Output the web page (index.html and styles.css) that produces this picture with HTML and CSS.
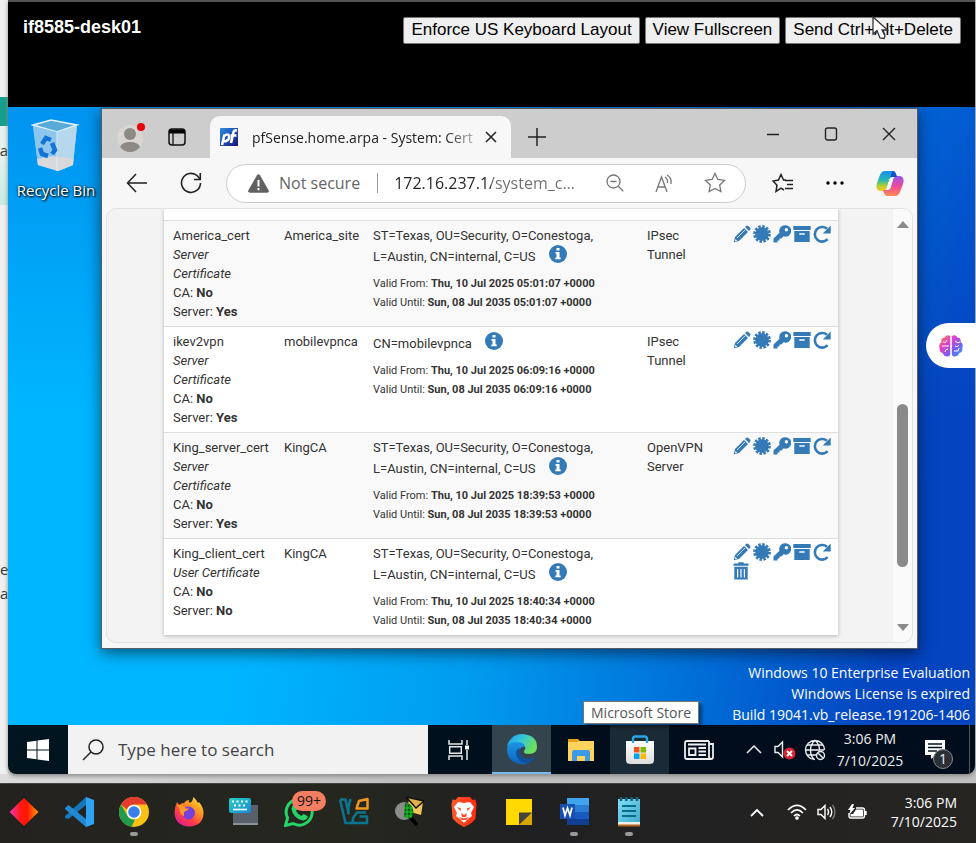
FILE: index.html
```html
<!DOCTYPE html>
<html lang="en">
<head>
<meta charset="utf-8">
<meta name="viewport" content="width=device-width, initial-scale=1">
<title>if8585-desk01</title>
<link rel="stylesheet" href="styles.css">
</head>
<body>
<svg class="defs" aria-hidden="true">
  <defs>
    <linearGradient id="g-edge1" x1="0" y1="0" x2="1" y2="0.4"><stop offset="0" stop-color="#1b9de2"/><stop offset=".5" stop-color="#35c4dd"/><stop offset="1" stop-color="#6be05a"/></linearGradient>
    <linearGradient id="g-edge2" x1="0" y1="0" x2="0" y2="1"><stop offset="0" stop-color="#1e96e6"/><stop offset="1" stop-color="#0a63bd"/></linearGradient>
    <linearGradient id="g-pf" x1="0" y1="0" x2="1" y2="1"><stop offset="0" stop-color="#2f8fe0"/><stop offset=".5" stop-color="#1b4fb2"/><stop offset="1" stop-color="#1c1470"/></linearGradient>
    <linearGradient id="g-cop1" x1="0" y1="0" x2="0" y2="1"><stop offset="0" stop-color="#1b8fec"/><stop offset=".45" stop-color="#27b7b5"/><stop offset=".75" stop-color="#b5cf34"/><stop offset="1" stop-color="#ffc51f"/></linearGradient>
    <linearGradient id="g-cop2" x1="0" y1="0" x2="0" y2="1"><stop offset="0" stop-color="#9a55ee"/><stop offset=".5" stop-color="#ec4b99"/><stop offset="1" stop-color="#ff8a4c"/></linearGradient>
    <linearGradient id="g-brain" x1="0" y1="0" x2="1" y2="1"><stop offset="0" stop-color="#ff8a3c"/><stop offset=".35" stop-color="#e63fc8"/><stop offset=".65" stop-color="#7a5cf5"/><stop offset="1" stop-color="#28a8f5"/></linearGradient>
    <linearGradient id="g-dia"><stop offset="0" stop-color="#f03ac0"/><stop offset=".35" stop-color="#ff1a1a"/><stop offset=".6" stop-color="#ff1500"/><stop offset="1" stop-color="#ff9a10"/></linearGradient>
    <linearGradient id="g-fox" x1="1" y1="0" x2="0.3" y2="1"><stop offset="0" stop-color="#fff04a"/><stop offset=".4" stop-color="#ff9a1f"/><stop offset=".75" stop-color="#ff3a4a"/><stop offset="1" stop-color="#e2208c"/></linearGradient>
    <linearGradient id="g-kb" x1="0" y1="0" x2="1" y2="1"><stop offset="0" stop-color="#2bd0c0"/><stop offset="1" stop-color="#1488d8"/></linearGradient>
    <linearGradient id="g-brave"><stop offset="0" stop-color="#ff5a2c"/><stop offset="1" stop-color="#ff2a10"/></linearGradient>
    <linearGradient id="g-store" x1="0" y1="0" x2="0" y2="1"><stop offset="0" stop-color="#fff"/><stop offset="1" stop-color="#dcdcdc"/></linearGradient>
    <linearGradient id="g-pad" x1="0" y1="0" x2="1" y2="1"><stop offset="0" stop-color="#7fe0f5"/><stop offset="1" stop-color="#3fa9cc"/></linearGradient>
  </defs>
  <symbol id="i-edit" viewBox="0 0 18 18"><path d="M2 12 11 3l4 4-9 9-5.200 1.200z"/><path d="m12 2 1-1q1.200-1 2.400 0L17 2.600q1 1.200 0 2.400l-1 1z"/><path d="m4 13 8-8" stroke="#fff" stroke-width=".8"/><path d="m2.500 14 1.800 1.800-2.300.5z" fill="#fff"/></symbol>
  <symbol id="i-badge" viewBox="0 0 18 18"><circle cx="9" cy="9" r="6.800"/><circle cx="9" cy="9" r="7.300" fill="none" stroke="currentColor" stroke-width="3.200" stroke-dasharray="2.400 1.420"/></symbol>
  <symbol id="i-key" viewBox="0 0 18 18"><path fill-rule="evenodd" d="M12 .3a5.700 5.700 0 0 0-5.500 7.400L.5 13.600V17.500h4v-2h2v-2h2l2-2.200A5.700 5.700 0 1 0 12 .3zm1.400 2.800a1.700 1.700 0 1 1 0 3.400 1.700 1.700 0 0 1 0-3.400z"/></symbol>
  <symbol id="i-box" viewBox="0 0 18 18"><path d="M.3 1h17.400v4H.3z"/><path fill-rule="evenodd" d="M1.300 6h15.400v11H1.300zm5 2.200v1.600h5.400V8.200z"/></symbol>
  <symbol id="i-renew" viewBox="0 0 18 18"><path d="M14.600 14.200A7.300 7.300 0 1 1 14 3.800" fill="none" stroke="currentColor" stroke-width="2.600"/><path d="M17.700.5v8H9.800z"/></symbol>
  <symbol id="i-trash" viewBox="0 0 16 18"><path d="M.5 1.500h4.800V.3h5.400v1.200h4.800v2.300H.5zM1.300 4.800h13.400v12.700H1.300z"/><path d="M4.600 7v8.500M8 7v8.500M11.400 7v8.500" stroke="#fff" stroke-width="1.200"/></symbol>
  <symbol id="i-info" viewBox="0 0 18 18"><circle cx="9" cy="9" r="9"/><path fill="#fff" d="M7.500 3h3v2.600h-3zM6.500 7h4v5.500h1.200v1.700H6.300v-1.700h1.200V8.700h-1z"/></symbol>
</svg>

<main class="host">
  <aside class="behind">
    <div class="behind-band"></div>
    <div class="behind-card">ta</div>
    <div class="behind-text">e<br>a</div>
  </aside>

  <section class="session">
    <header class="session-bar">
      <h1>if8585-desk01</h1>
      <div class="session-actions">
        <button type="button">Enforce US Keyboard Layout</button>
        <button type="button">View Fullscreen</button>
        <button type="button">Send Ctrl+Alt+Delete</button>
      </div>
      <svg class="cursor" width="17" height="24" viewBox="0 0 17 24"><path d="M1 1v17l4-3.500 3 7.500 4 .5 1-2.500-3-6h5.500z" fill="#fff" stroke="#333" stroke-width="1.300"/></svg>
    </header>

    <div class="desktop">
      <div class="shortcut">
        <svg width="50" height="56" viewBox="0 0 50 56">
          <path d="M2 7 20 2l26 5-4 40-15 6-20-6z" fill="#9fcdec"/>
          <path d="M2 7 20 2l26 5-20 7z" fill="#58abd8" stroke="#e4f2fa" stroke-width="1.500"/>
          <path d="M2 8 26 14l1 38-20-5z" fill="#8cc6ec"/><path d="M26 14 46 8l-4 39-15 6z" fill="#b7d8ec"/>
          <path d="M6 41 22 38l20 3v6l-15 6-20-6z" fill="#d9d9db"/><path d="M26 14v39" stroke="#d9edf8"/>
          <g fill="none" stroke="#1673d6" stroke-width="4.500"><path d="m11 26 4-6 5 2"/><path d="m21 25 3 7-3 4"/><path d="m17 38-6-2-2-6"/></g>
        </svg>
        <span>Recycle Bin</span>
      </div>

      <div class="watermark">Windows 10 Enterprise Evaluation<br>Windows License is expired<br>Build 19041.vb_release.191206-1406</div>

      <article class="browser">
        <div class="tabs">
          <button type="button" class="plain profile" aria-label="Profile">
            <svg width="30" height="30" viewBox="0 0 30 30"><circle cx="14" cy="16" r="13" fill="#d9d6d2"/><circle cx="14" cy="12" r="6" fill="#8d8985"/><path d="M4 25q2-5 10-5t10 5q-4 5-10 5t-10-5z" fill="#8d8985"/><circle cx="25" cy="5" r="4" fill="#e8000c"/></svg>
          </button>
          <button type="button" class="plain spaces" aria-label="Tab actions">
            <svg width="18" height="18" viewBox="0 0 18 18"><rect x="1" y="1" width="16" height="16" rx="3" fill="none" stroke="#111" stroke-width="1.500"/><path d="M1 1.500h16V5.500H1z"/><path d="M5 5v12" stroke="#111" stroke-width="1.300"/></svg>
          </button>
          <div class="tab">
            <svg width="18" height="18" viewBox="0 0 18 18"><path fill="url(#g-pf)" d="M0 0h18v18H0z"/><g fill="none" stroke="#fff" stroke-width="2.600"><path d="M2 17 4.500 6.500M4 8q4-3 5 0t-2 4.500-4 0"/><path d="M11 15 13.500 4q.8-2 3.500-1.500M10.500 7.500h6"/></g></svg>
            <span class="tab-title">pfSense.home.arpa - System: Cert</span>
            <button type="button" class="plain" aria-label="Close tab"><svg width="12" height="12" viewBox="0 0 12 12"><path d="m1 1 10 10M11 1 1 11" stroke="#222" stroke-width="1.500"/></svg></button>
          </div>
          <button type="button" class="plain newtab" aria-label="New tab"><svg width="18" height="18" viewBox="0 0 18 18"><path d="M9 0v18M0 9h18" stroke="#222" stroke-width="1.500"/></svg></button>
          <div class="caption">
            <button type="button" class="plain" aria-label="Minimize"><svg width="14" height="14" viewBox="0 0 14 14"><path d="M1 7.500h12" stroke="#222" stroke-width="1.300"/></svg></button>
            <button type="button" class="plain" aria-label="Maximize"><svg width="14" height="14" viewBox="0 0 14 14"><rect x="1.500" y="1" width="11" height="12" rx="2" fill="none" stroke="#222" stroke-width="1.400"/></svg></button>
            <button type="button" class="plain" aria-label="Close"><svg width="14" height="14" viewBox="0 0 14 14"><path d="m1 1 12 12M13 1 1 13" stroke="#222" stroke-width="1.400"/></svg></button>
          </div>
        </div>

        <div class="toolbar">
          <button type="button" class="plain" aria-label="Back"><svg width="22" height="20" viewBox="0 0 22 20"><path d="M21 10H2M10 1 1.500 10l8.500 9" fill="none" stroke="#222" stroke-width="1.500"/></svg></button>
          <button type="button" class="plain" aria-label="Refresh"><svg width="22" height="22" viewBox="0 0 22 22"><path d="M20.500 11A9.500 9.500 0 1 1 17.500 4l2.500 3" fill="none" stroke="#222" stroke-width="1.600"/><path d="M20.300 1v6.500H14" fill="none" stroke="#222" stroke-width="1.600"/></svg></button>
          <div class="address">
            <svg width="21" height="19" viewBox="0 0 21 19"><path d="M9 1.200q1.500-2 3 0l8.600 15q.8 2.400-1.600 2.600H2q-2.400-.2-1.600-2.600z" fill="#616161"/><path d="M10.500 6v6.500M10.500 14v2.300" stroke="#fff" stroke-width="2"/></svg>
            <label for="url">Not secure</label>
            <i class="divider"></i>
            <input id="url" type="text" value="172.16.237.1/system_c...">
            <button type="button" class="plain" aria-label="Zoom out"><svg width="18" height="18" viewBox="0 0 18 18" fill="none" stroke="#777" stroke-width="1.300"><circle cx="7.500" cy="7.500" r="6.500"/><path d="m12.300 12.300 5 5M4.500 7.500h6"/></svg></button>
            <button type="button" class="plain" aria-label="Read aloud"><svg width="20" height="20" viewBox="0 0 20 20" fill="none" stroke="#777" stroke-width="1.300"><path d="M2 19 7.500 4 13 19M4 14h7M11 4q3 2 2.500 6M13 2q5 3 4 9"/></svg></button>
            <button type="button" class="plain" aria-label="Favorite this page"><svg width="22" height="22" viewBox="0 0 22 22"><path d="m11 1.500 2.900 6 6.600.9-4.800 4.600 1.200 6.600L11 16.500l-5.900 3.100L6.300 13 1.500 8.400l6.600-.9z" fill="none" stroke="#777" stroke-width="1.300"/></svg></button>
          </div>
          <button type="button" class="plain" aria-label="Favorites"><svg width="22" height="20" viewBox="0 0 22 20" fill="none" stroke="#222" stroke-width="1.500"><path d="M12 17 9 15.200 4 18.400 5 12.200 1 8l5.500-1L9 1.500 11.500 7H14M13 7.500h8M15 11.500h6M13 15.500h8"/></svg></button>
          <button type="button" class="plain" aria-label="More"><svg width="18" height="4" viewBox="0 0 18 4"><circle cx="2" cy="2" r="1.700"/><circle cx="9" cy="2" r="1.700"/><circle cx="16" cy="2" r="1.700"/></svg></button>
          <button type="button" class="plain" aria-label="Copilot"><svg width="28" height="27" viewBox="0 0 28 27"><path d="M9 1h8q2 0 3 3l1 3h-4q-3 0-4 4l-2 7q-1 3-4 3H4q-5-1-3-8l3-8q1.500-4 5-4z" fill="url(#g-cop1)"/><path d="M19 26h-8q-2 0-3-3l-1-3h4q3 0 4-4l2-7q1-3 4-3h3q5 1 3 8l-3 8q-1.500 4-5 4z" fill="url(#g-cop2)"/><path d="M16 1q3 0 4 3l1 3h-4q-2 0-3 2z" fill="#1550c8"/><path d="m13.500 9-2.800 9.500q-.7 1.500-2 1.500h2.800q2.500 0 3.300-2.800l2.500-8.400q.4-1.700 2-1.800h-2.600q-2.400 0-3.200 2z" fill="#fff"/></svg></button>
        </div>

        <div class="pane">
          <div class="page">
            <div class="cut-row"></div>
            <table>
              <colgroup><col class="c-name"><col class="c-issuer"><col><col class="c-use"><col class="c-act"></colgroup>
              <tbody>
                <tr>
                  <td>America_cert<br><i>Server<br>Certificate</i><br>CA: <b>No</b><br>Server: <b>Yes</b></td>
                  <td>America_site</td>
                  <td>ST=Texas, OU=Security, O=Conestoga,
                    <div class="dn">L=Austin, CN=internal, C=US <svg><use href="#i-info"/></svg></div>
                    <div class="valid">Valid From: <b>Thu, 10 Jul 2025 05:01:07 +0000</b><br>Valid Until: <b>Sun, 08 Jul 2035 05:01:07 +0000</b></div></td>
                  <td>IPsec<br>Tunnel</td>
                  <td><div class="acts"><a href="#" aria-label="Edit"><svg><use href="#i-edit"/></svg></a><a href="#" aria-label="Export certificate"><svg><use href="#i-badge"/></svg></a><a href="#" aria-label="Export key"><svg><use href="#i-key"/></svg></a><a href="#" aria-label="Export archive"><svg><use href="#i-box"/></svg></a><a href="#" aria-label="Renew"><svg><use href="#i-renew"/></svg></a></div></td>
                </tr>
                <tr>
                  <td>ikev2vpn<br><i>Server<br>Certificate</i><br>CA: <b>No</b><br>Server: <b>Yes</b></td>
                  <td>mobilevpnca</td>
                  <td><div class="dn">CN=mobilevpnca <svg><use href="#i-info"/></svg></div>
                    <div class="valid">Valid From: <b>Thu, 10 Jul 2025 06:09:16 +0000</b><br>Valid Until: <b>Sun, 08 Jul 2035 06:09:16 +0000</b></div></td>
                  <td>IPsec<br>Tunnel</td>
                  <td><div class="acts"><a href="#" aria-label="Edit"><svg><use href="#i-edit"/></svg></a><a href="#" aria-label="Export certificate"><svg><use href="#i-badge"/></svg></a><a href="#" aria-label="Export key"><svg><use href="#i-key"/></svg></a><a href="#" aria-label="Export archive"><svg><use href="#i-box"/></svg></a><a href="#" aria-label="Renew"><svg><use href="#i-renew"/></svg></a></div></td>
                </tr>
                <tr>
                  <td>King_server_cert<br><i>Server<br>Certificate</i><br>CA: <b>No</b><br>Server: <b>Yes</b></td>
                  <td>KingCA</td>
                  <td>ST=Texas, OU=Security, O=Conestoga,
                    <div class="dn">L=Austin, CN=internal, C=US <svg><use href="#i-info"/></svg></div>
                    <div class="valid">Valid From: <b>Thu, 10 Jul 2025 18:39:53 +0000</b><br>Valid Until: <b>Sun, 08 Jul 2035 18:39:53 +0000</b></div></td>
                  <td>OpenVPN<br>Server</td>
                  <td><div class="acts"><a href="#" aria-label="Edit"><svg><use href="#i-edit"/></svg></a><a href="#" aria-label="Export certificate"><svg><use href="#i-badge"/></svg></a><a href="#" aria-label="Export key"><svg><use href="#i-key"/></svg></a><a href="#" aria-label="Export archive"><svg><use href="#i-box"/></svg></a><a href="#" aria-label="Renew"><svg><use href="#i-renew"/></svg></a></div></td>
                </tr>
                <tr>
                  <td>King_client_cert<br><i>User Certificate</i><br>CA: <b>No</b><br>Server: <b>No</b></td>
                  <td>KingCA</td>
                  <td>ST=Texas, OU=Security, O=Conestoga,
                    <div class="dn">L=Austin, CN=internal, C=US <svg><use href="#i-info"/></svg></div>
                    <div class="valid">Valid From: <b>Thu, 10 Jul 2025 18:40:34 +0000</b><br>Valid Until: <b>Sun, 08 Jul 2035 18:40:34 +0000</b></div></td>
                  <td></td>
                  <td><div class="acts"><a href="#" aria-label="Edit"><svg><use href="#i-edit"/></svg></a><a href="#" aria-label="Export certificate"><svg><use href="#i-badge"/></svg></a><a href="#" aria-label="Export key"><svg><use href="#i-key"/></svg></a><a href="#" aria-label="Export archive"><svg><use href="#i-box"/></svg></a><a href="#" aria-label="Renew"><svg><use href="#i-renew"/></svg></a><a href="#" aria-label="Delete"><svg class="trash"><use href="#i-trash"/></svg></a></div></td>
                </tr>
              </tbody>
            </table>
          </div>
          <div class="scroll">
            <svg width="12" height="7" viewBox="0 0 12 7"><path d="M0 7 6 0l6 7z" fill="#8a8a8a"/></svg>
            <div class="rail"><div class="thumb"></div></div>
            <svg width="12" height="7" viewBox="0 0 12 7"><path d="M0 0 6 7l6-7z" fill="#8a8a8a"/></svg>
          </div>
        </div>
      </article>
      <div class="tooltip">Microsoft Store</div>
    </div>

    <footer class="vmbar">
      <button type="button" class="plain start" aria-label="Start"><svg width="22" height="22" viewBox="0 0 22 22" fill="#fff"><path d="M0 3l9.500-1.300v8.800H0zM10.500 1.500 22 0v10.500H10.500zM0 11.500h9.500v8.800L0 19zM10.500 11.500H22V22l-11.500-1.500z"/></svg></button>
      <div class="search"><svg width="22" height="22" viewBox="0 0 22 22" fill="none" stroke="#222" stroke-width="1.500"><circle cx="14" cy="8" r="7"/><path d="m9 13-8 8"/></svg><input type="search" placeholder="Type here to search" aria-label="Search"></div>
      <button type="button" class="plain view" aria-label="Task View"><svg width="22" height="20" viewBox="0 0 22 20" fill="none" stroke="#e8e8e8" stroke-width="1.500"><path d="M1 0v4h13V0M1 20v-4h13v4M1.700 6.700h11.600v6.600H1.700zM19 0v5M19 10v10"/><path d="M17 5.500h4v4h-4z" fill="#fff" stroke="none"/></svg></button>
      <button type="button" class="plain app active" aria-label="Microsoft Edge"><svg width="32" height="32" viewBox="0 0 32 32"><path d="M1 14A15 15 0 0 1 16 1q15 1 15 13 0 7-8 7-6 0-5-3 2-2 1-4-2-5-9-4-7 1-9 4z" fill="url(#g-edge1)"/><path d="M1 16Q2 9 10 9q8 0 9 5-3-1-5 2-4 6 2 11 4 2 8 2-4 3-9 2Q1 29 1 16z" fill="url(#g-edge2)"/><path d="M14 15q-6 2-3 9 4 7 10 6 6-1 8-6-6 3-11 1-7-4-4-10z" fill="#124f9c"/></svg></button>
      <button type="button" class="plain app" aria-label="File Explorer"><svg width="28" height="24" viewBox="0 0 28 24"><path d="M1 1h10l2 2h13v20H1z" fill="#e3a21a"/><path d="M1 4h9l3-1h14v20H1z" fill="#ffd35e"/><path d="M5 23v-9q0-2 2-2h14q2 0 2 2v9h-5v-5h-8v5z" fill="#3a9be6"/></svg></button>
      <button type="button" class="plain app hover" aria-label="Microsoft Store"><svg width="30" height="30" viewBox="0 0 30 30"><path d="M8 9V4q0-2.500 2.500-2.500h9Q22 1.500 22 4v5" fill="none" stroke="#27a9e6" stroke-width="2.400"/><path d="M1 6h28v19q0 4-4 4H5q-4 0-4-4z" fill="url(#g-store)"/><path d="M8 8V6M22 8V6" stroke="#27a9e6" stroke-width="2.400"/><path d="M9 12h5.500v5.500H9z" fill="#f25022"/><path d="M15.500 12H21v5.500h-5.500z" fill="#7fba00"/><path d="M9 18.500h5.500V24H9z" fill="#00a4ef"/><path d="M15.500 18.500H21V24h-5.500z" fill="#ffb900"/></svg></button>
      <button type="button" class="plain app" aria-label="News"><svg width="30" height="20" viewBox="0 0 30 20" fill="none" stroke="#eee" stroke-width="1.800"><path d="M25 1H3Q1 1 1 3v14q0 2 2 2h24q2 0 2-2V4h-4M25 1v15q0 3 2 3M4 4.500h18M14.500 8H22M14.500 11.500H22M14.500 15H22M5 8.500h6.500v6.500H5z"/></svg></button>
      <div class="vmtray">
        <svg width="16" height="9" viewBox="0 0 16 9"><path d="m1 8 7-7 7 7" fill="none" stroke="#eee" stroke-width="1.500"/></svg>
        <svg class="mute" width="22" height="20" viewBox="0 0 22 20"><path d="M1 6.500h3L8.500 2v15L4 12.500H1z" fill="none" stroke="#eee" stroke-width="1.400"/><circle cx="15.500" cy="13.500" r="6" fill="#d92232"/><path d="m13 11 5 5M18 11l-5 5" stroke="#fff" stroke-width="1.800"/></svg>
        <svg class="globe" width="22" height="22" viewBox="0 0 22 22" fill="none" stroke="#eee" stroke-width="1.400"><path d="M11 20.500A9.500 9.500 0 1 1 20.500 11M11 1.500Q6.500 5 6.500 11T10 20.500M11 1.500Q15.500 5 15.500 11M3 6h16M2 11h18M3 16h9"/><circle cx="16.500" cy="16.500" r="4"/><path d="m13.700 13.700 5.600 5.600"/></svg>
        <div class="vmclock">3:06 PM<br>7/10/2025</div>
        <div class="note"><svg width="22" height="21" viewBox="0 0 22 21"><path d="M1 1h20v15H12l-5 4v-4H1z" fill="#fff"/><path d="M4 5h14M4 8.500h14M4 12h9" stroke="#06101c" stroke-width="1.500"/></svg><span>1</span></div>
      </div>
    </footer>
  </section>

  <button type="button" class="plain brain" aria-label="Assistant"><svg width="24" height="24" viewBox="0 0 24 24"><path d="M11.200 2q-4-2-5.500 1.500Q1.500 4 2.500 8-1 10.500.7 14q-.7 4 3 5 1.300 4 5.500 3.500 2-.3 2-2.500zM12.800 2q4-2 5.500 1.500Q22.500 4 21.500 8q3.500 2.500 1.800 6 .7 4-3 5-1.300 4-5.500 3.500-2-.3-2-2.500z" fill="url(#g-brain)"/><path d="M3 12h7M4 8q3 2 4-2M6 18q0-3 3-3M21 8q-2 2-5-1M20 11q-2 3-4 1M15 17h4l1-3" fill="none" stroke="#fff"/></svg></button>
</main>

<nav class="hostbar">
  <div class="apps">
    <div class="ico"><svg viewBox="0 0 30 30"><path d="m15 1 14.500 14L15 29 .5 15z" fill="url(#g-dia)"/></svg></div>
    <div class="ico"><svg viewBox="0 0 30 30"><path d="M1 19 22 0v8L4.500 22 1 21z" fill="#1277bd"/><path d="M1 11 4.500 8 22 22v8L1 12z" fill="#2189d2"/><path d="m22 0 8 3v24l-8 3z" fill="#2ea3f2"/></svg></div>
    <div class="ico run"><svg viewBox="0 0 30 30"><circle cx="15" cy="15" r="15" fill="#fbc116"/><path d="M2 7.500A15 15 0 0 1 28 7.500H15a7.500 7.500 0 0 0-7 5z" fill="#e33b2e"/><path d="M2 7.500 8.500 18.700A7.500 7.500 0 0 0 16 22.400L12.500 29.800A15 15 0 0 1 2 7.500z" fill="#229a4c"/><circle cx="15" cy="15" r="7.300" fill="#fff"/><circle cx="15" cy="15" r="5.800" fill="#3b7de9"/></svg></div>
    <div class="ico"><svg viewBox="0 0 30 30"><path d="M3 5q1 1 2 3 2-2 5-2 2-3 5-3-1 2 1 3Q19 4 19.500 0q3 3 4.500 6l1-1q5 6 4.500 12-1 12-14.500 12.500Q1.500 29 .5 16q0-6 2.500-11z" fill="url(#g-fox)"/><circle cx="14.500" cy="16" r="6.500" fill="#7540dc"/><path d="M3 8q6-1 8 3 2 1 4 0-1 3-4 3-2 2-1 5-4-1-4-5-1-4-3-6z" fill="#ff9a25"/></svg></div>
    <div class="ico"><svg viewBox="0 0 30 30"><path d="M4 8h25v19H4z" fill="#596069"/><path d="M4 26h25v2H4z" fill="#8a9098"/><rect width="22" height="15" y="1" rx="2" fill="url(#g-kb)"/><path d="M3 4.500h16M5 8.500h13" stroke="#fff" stroke-width="2" stroke-dasharray="2 2.500"/><path d="M4 12.500h14" stroke="#fff" stroke-width="1.600"/></svg></div>
    <div class="ico"><svg viewBox="0 0 30 30"><path d="M1.500 28.500 3.600 21A13 13 0 1 1 9 26.500z" fill="none" stroke="#25d366" stroke-width="3"/><path d="M9.500 8h2.500l1.500 4-1.500 2q2 3.500 5.500 5l2-2 4 2v2q-2 3-5.500 2.300Q9 21 7.500 12q0-3 2-4z" fill="#25d366"/></svg><span class="count">99+</span></div>
    <div class="ico"><svg viewBox="0 0 30 30" fill="none" stroke-width="2.500" stroke-linejoin="round"><path d="M1 2.500h5.500l3 14V10M12.500 3H11L9.500 10M1 2.500 6.500 26h6.500l1-4M27 15.500h-9l-4 5.500v5h14v-6.500h-7.500" stroke="#0b7590"/><path d="M28.500 11.500h-11L20 4l8.500-2z" stroke="#f0961f"/></svg></div>
    <div class="ico"><svg viewBox="0 0 30 30"><path d="m15 2 14 3-2 13-14-4z" fill="#f4c55c"/><path d="m12 0 18 4-8 7z" fill="#e2b04a" stroke="#111" stroke-width="1.500"/><circle cx="10" cy="14" r="9" fill="#8a8d8a"/><path d="M11 6a9 9 0 0 1 6 15l-7-1z" fill="#075f10"/><path d="M10 11h9M10 15h9M10 19h8M13 7v15M17 8v13" stroke="#20d02c"/><path d="m17 21 6 7" stroke="#000" stroke-width="3.500"/></svg></div>
    <div class="ico"><svg viewBox="0 0 30 30"><path d="m9 0h12l2.500 3 3-.5 1 5-1 14q-3 5-11.500 8.500Q6.500 26 3.500 21l-1-14 1-4.500 3 .5z" fill="url(#g-brave)"/><path d="m9 5 6 1 6-1 4 5-3 6 1 3-4 3-4 4-4-4-4-3 1-3-3-6z" fill="#fff"/><path d="m8 10 4 1.500-.5 2.500zM22 10l-4 1.500.5 2.500zM12 16l3 2 3-2-1 4h-4zM10 20l5 1.500 5-1.500-3 3h-4z" fill="#ff4520"/></svg></div>
    <div class="ico"><svg viewBox="0 0 30 30"><path d="M2 2h26v26H2z" fill="#ffd900"/><path d="M15 28h13V16z" fill="#d9a400"/><path d="M15 15.500h13L15 28z" fill="#45413c"/></svg></div>
    <div class="ico run"><svg viewBox="0 0 30 30"><path d="M8 1h22v7H8z" fill="#41a5ee"/><path d="M8 8h22v7H8z" fill="#2b7cd3"/><path d="M8 15h22v7H8z" fill="#185abd"/><path d="M8 22h22v6H8z" fill="#103f91"/><path d="M1 7h15v15H1z" fill="#1650b0"/><path d="m4 10.500 2 8 2.500-7.500 2.500 7.500 2-8" fill="none" stroke="#fff" stroke-width="1.700"/></svg></div>
    <div class="ico run"><svg viewBox="0 0 30 30"><path d="M4 2h22v24H4z" fill="url(#g-pad)"/><path d="M4 25h22v3H4z" fill="#f0eee8"/><path d="M4 27.500h22v2H4z" fill="#b5651d"/><path d="M8 9h14M8 14h14M8 19h14" stroke="#0a6a8c" stroke-width="2"/><path d="M7 0v4M12.300 0v4M17.600 0v4M23 0v4" stroke="#12627e" stroke-width="2.500"/></svg></div>
  </div>
  <div class="hosttray">
    <svg width="14" height="9" viewBox="0 0 14 9"><path d="m1 8 6-6 6 6" fill="none" stroke="#fff" stroke-width="1.800"/></svg>
    <svg class="wifi" width="20" height="16" viewBox="0 0 20 16" fill="none" stroke="#fff" stroke-width="1.700"><path d="M1 6q9-9 18 0M4 9q6-6 12 0M7 12q3-3 6 0"/><circle cx="10" cy="14" r="1" fill="#fff"/></svg>
    <svg class="vol" width="20" height="16" viewBox="0 0 20 16" fill="none" stroke="#fff" stroke-width="1.400"><path d="M1 5.500h3L8 1.500v13l-4-4H1zM10.500 5q2 3 0 6M13 3q3.500 5 0 10"/><path d="M15.500 1q5 7 0 14" stroke="#777"/></svg>
    <svg class="bat" width="20" height="16" viewBox="0 0 20 16"><path d="M9 4h6.500q2 0 2 2v6q0 2-2 2H4q-2 0-2-2V9" fill="none" stroke="#fff" stroke-width="1.400"/><path d="M9 5.500h7v7H3.500V10H6z" fill="#fff"/><path d="M18 7h1.700v4H18zM5 0 1 6h2.500L2 11l6-7H5.500L7 0z" fill="#fff"/></svg>
    <div class="hostclock">3:06 PM<br>7/10/2025</div>
  </div>
</nav>
</body>
</html>
```
FILE: styles.css
```css
* { box-sizing: border-box; }

body {
  margin: 0;
  min-height: 100vh;
  display: flex;
  flex-direction: column;
  overflow: hidden;
  font-family: "Open Sans", "Noto Sans", sans-serif;
  font-size: 14px;
  color: #333;
  background: #c4c4c4;
}

svg { display: block; flex: none; }
.defs { position: absolute; width: 0; height: 0; }

.plain {
  display: flex;
  align-items: center;
  justify-content: center;
  flex: none;
  padding: 0;
  border: 0;
  background: none;
}

/* Remote session */
.host {
  position: relative;
  flex: 1;
  display: grid;
  grid-template-columns: 8px 1fr;
  padding: 0 1px 9px 0;
  background: linear-gradient(90deg, #dcdcdc, #c0c0c0 40%);
}

.behind {
  overflow: hidden;
  padding-top: 97px;
  background: #f0f0f0;
  font-size: 15px;
  line-height: 24px;
}
.behind-band { height: 29px; background: #159e8c; }
.behind-card {
  display: flex;
  justify-content: flex-end;
  height: 79px;
  padding-top: 12px;
  background: linear-gradient(#e4f3f0 30%, #c8ebe4);
}
.behind-text { margin-top: 352px; }

.session {
  display: flex;
  flex-direction: column;
  min-width: 0;
  border-top: 2px solid #555;
  border-radius: 0 0 8px 8px;
  overflow: hidden;
  box-shadow: 0 2px 4px #888;
}

.session-bar {
  position: relative;
  display: flex;
  justify-content: space-between;
  align-items: flex-start;
  height: 105px;
  padding: 15px 14px 0 15px;
  background: #000;
  font-family: "Liberation Sans", Arial, sans-serif;
}
.session-bar h1 { margin: 0; font-size: 18px; line-height: 21px; color: #fff; }
.session-actions { display: flex; gap: 5px; }
.session-actions button {
  height: 27px;
  padding: 0 7px 1px;
  border: 1px solid #767676;
  border-radius: 2px;
  background: #efefef;
  color: #000;
  font-family: inherit;
  font-size: 17px;
}
.cursor { position: absolute; top: 14px; right: 86px; }

.desktop {
  position: relative;
  flex: 1;
  background:
    linear-gradient(#0070e080, #0070e000 50%),
    linear-gradient(100deg, #00b6ff 30%, #009cf0 52%, #006fd8 73%, #0444bf 91%);
}

.shortcut {
  position: absolute;
  top: 11px;
  left: 0;
  width: 96px;
  display: flex;
  flex-direction: column;
  align-items: center;
  gap: 6px;
  color: #fff;
  font-size: 15px;
  line-height: 20px;
  text-shadow: 1px 1px 2px #000, 0 0 3px #000;
}

.watermark {
  position: absolute;
  right: 5px;
  bottom: 0;
  color: #fff;
  font-size: 14px;
  line-height: 21px;
  text-align: right;
}

.tooltip {
  position: absolute;
  left: 575px;
  bottom: 1px;
  padding: 0 7px;
  border: 1px solid #777;
  background: #fff;
  color: #575757;
  font-size: 14px;
  line-height: 21px;
  box-shadow: 3px 3px 3px #0006;
}

/* Browser window */
.browser {
  position: absolute;
  inset: 1px 57px 76px 93px;
  display: flex;
  flex-direction: column;
  border: 1px solid #555c66;
  background: #f7f7f7;
  box-shadow: 0 4px 14px #0008;
}

.tabs {
  display: flex;
  align-items: center;
  height: 49px;
  background: #cdcdcd;
}
.profile { width: 30px; margin: 6px 0 0 14px; }
.spaces { width: 18px; margin: 6px 24px 0 22px; }
.tab {
  align-self: flex-end;
  display: flex;
  align-items: center;
  width: 301px;
  height: 42px;
  padding: 0 14px 0 10px;
  border-radius: 10px 10px 0 0;
  background: #f7f7f7;
  color: #222;
}
.tab-title {
  flex: 1;
  margin: 0 6px 0 14px;
  white-space: nowrap;
  font-size: 14px;
  -webkit-mask-image: linear-gradient(90deg, #000 85%, #0003);
  mask-image: linear-gradient(90deg, #000 85%, #0003);
}
.newtab { margin: 6px 0 0 17px; }
.caption { display: flex; gap: 44px; margin: 0 21px 0 auto; }

.toolbar {
  display: flex;
  align-items: center;
  height: 50px;
  padding: 0 13px 0 24px;
  gap: 32px;
}
.address {
  flex: 1;
  display: flex;
  align-items: center;
  min-width: 0;
  height: 39px;
  margin: 0 -6px 0 -8px;
  padding: 0 19px 0 21px;
  border: 1px solid #ccc;
  border-radius: 20px;
  background: #fff;
  gap: 30px;
}
.address label { margin: 0 -13px 0 -20px; color: #666; font-size: 16px; }
.divider { width: 1px; height: 20px; background: #999; }
.address input {
  flex: 1;
  min-width: 0;
  margin: 0 -20px 0 -14px;
  padding: 0;
  border: 0;
  outline: 0;
  font: 16px "Open Sans", "Noto Sans", sans-serif;
  color: #222;
  background: linear-gradient(90deg, #222 97px, #707070 97px);
  -webkit-background-clip: text;
  background-clip: text;
  -webkit-text-fill-color: transparent;
}

.pane {
  flex: 1;
  display: flex;
  min-height: 0;
  margin: 0 4px 5px;
  border: 1px solid #e2e2e2;
  border-radius: 10px;
  overflow: hidden;
  background: #f3f3f3;
}
.page {
  flex: 1;
  align-self: flex-start;
  margin: 0 55px 0 57px;
  background: #fff;
  box-shadow: 0 1px 4px #0004;
}
.cut-row { height: 11px; }

table {
  width: 100%;
  table-layout: fixed;
  border-collapse: collapse;
  font-family: Roboto, "Liberation Sans", sans-serif;
  font-size: 13px;
  line-height: 19px;
}
.c-name { width: 111px; }
.c-issuer { width: 89px; }
.c-use { width: 86px; }
.c-act { width: 114px; }
td {
  padding: 5px 0 5px 9px;
  border-top: 1px solid #ddd;
  vertical-align: top;
  white-space: nowrap;
}
td:last-child { padding-top: 4px; }
tr:nth-child(odd) { background: #f9f9f9; }
.dn { display: flex; align-items: center; gap: 13px; height: 22px; }
.dn svg { width: 18px; height: 18px; margin-bottom: 4px; fill: #337ab7; }
.valid { margin-top: 7px; font-size: 11px; }
.acts { display: flex; flex-wrap: wrap; gap: 1px 2px; }
.acts a { display: block; color: #337ab7; }
.acts svg { width: 18px; height: 18px; fill: currentColor; }
.acts .trash { width: 16px; }

.scroll {
  display: flex;
  flex-direction: column;
  align-items: center;
  gap: 3px;
  width: 19px;
  padding: 12px 0 11px;
  background: #fafafa;
}
.rail { flex: 1; display: flex; flex-direction: column; }
.rail::before { content: ""; flex: 173; }
.rail::after { content: ""; flex: 54; }
.thumb { flex: 163; width: 11px; border-radius: 6px; background: #8a8a8a; }

/* Remote taskbar */
.vmbar {
  display: flex;
  height: 49px;
  background: linear-gradient(90deg, #00151f, #000d1c 70%);
  color: #eee;
}
.start { width: 60px; }
.search {
  display: flex;
  align-items: center;
  width: 360px;
  padding: 0 14px;
  gap: 14px;
  background: #f2f2f2;
}
.search input {
  flex: 1;
  min-width: 0;
  padding: 0;
  border: 0;
  background: none;
  font: 17px "Open Sans", "Noto Sans", sans-serif;
}
.search input::placeholder { color: #444; opacity: 1; }
.view { width: 62px; }
.app { width: 59px; }
.app.active { background: #34444f; border-bottom: 2px solid #76b9ed; margin-left: 2px; }
.app.hover { background: #1b2a37; }
.vmtray { display: flex; align-items: center; margin-left: auto; padding-right: 5px; }
.mute { margin-left: 12px; }
.globe { margin-left: 8px; }
.vmclock { width: 88px; text-align: center; font-size: 14px; line-height: 22px; }
.note {
  position: relative;
  width: 56px;
  height: 49px;
  padding: 14px 0 0 10px;
  border-right: 1px solid #555;
}
.note span {
  position: absolute;
  left: 19px;
  top: 24px;
  width: 20px;
  height: 20px;
  border: 1px solid #888;
  border-radius: 50%;
  background: #2b3036;
  font-size: 14px;
  line-height: 18px;
  text-align: center;
}

.brain {
  position: absolute;
  top: 323px;
  right: 0;
  width: 50px;
  height: 45px;
  border-radius: 23px 0 0 23px;
  background: #fff;
}

/* Host taskbar */
.hostbar {
  display: flex;
  justify-content: space-between;
  align-items: center;
  height: 60px;
  padding: 0 19px 3px 9px;
  background: linear-gradient(90deg, #24221f, #25271f 35%, #202022 55%, #272522);
  border-top: 1px solid #444;
  color: #fff;
}
.apps { display: flex; gap: 25px; }
.ico { position: relative; width: 30px; height: 30px; }
.ico svg { width: 30px; height: 30px; }
.run::after {
  content: "";
  position: absolute;
  left: 11px;
  top: 35px;
  width: 8px;
  height: 4px;
  border-radius: 2px;
  background: #999;
}
.count {
  position: absolute;
  left: 8px;
  top: -6px;
  width: 34px;
  border-radius: 10px;
  background: #f47d62;
  color: #111;
  font-size: 14px;
  line-height: 20px;
  text-align: center;
}
.hosttray { display: flex; align-items: center; }
.wifi { margin-left: 23px; }
.vol { margin-left: 10px; }
.bat { margin-left: 10px; }
.hostclock { margin-left: 24px; font-size: 14px; line-height: 19px; text-align: right; }
```
